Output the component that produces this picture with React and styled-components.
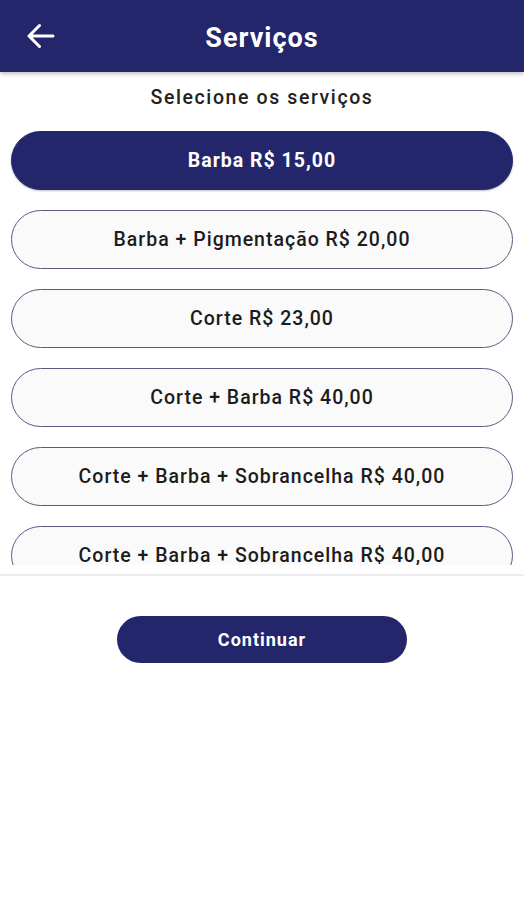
import styled, { createGlobalStyle } from "styled-components";

const navy = "#24266b";

const GlobalStyle = createGlobalStyle`
  html, body {
    margin: 0;
    padding: 0;
    background: #ffffff;
    font-family: Roboto, "Noto Sans", sans-serif;
  }
`;

const Screen = styled.div`
  width: 524px;
  height: 900px;
  display: flex;
  flex-direction: column;
  background: #ffffff;
`;

const Header = styled.header`
  height: 72px;
  flex-shrink: 0;
  background: ${navy};
  box-shadow: 0 2px 4px rgba(0, 0, 0, 0.25);
  display: grid;
  grid-template-columns: 80px 1fr 80px;
  align-items: center;
  position: relative;
  z-index: 1;
`;

const BackButton = styled.button`
  border: none;
  background: none;
  padding: 0 0 0 27px;
  height: 100%;
  display: flex;
  align-items: center;
  cursor: pointer;
`;

const Title = styled.h1`
  margin: 3px 0 0;
  text-align: center;
  color: #ffffff;
  font-size: 27px;
  font-weight: 700;
  letter-spacing: 1px;
`;

const Subtitle = styled.p`
  margin: 14px 0 0;
  line-height: 24px;
  text-align: center;
  font-size: 19.5px;
  font-weight: 500;
  letter-spacing: 1.6px;
  color: #222222;
`;

const ListViewport = styled.div`
  margin-top: 21px;
  height: 434px;
  overflow: hidden;
  padding: 0 11px;
`;

const List = styled.div`
  display: flex;
  flex-direction: column;
  gap: 20px;
`;

const ServiceButton = styled.button`
  height: 59px;
  width: 100%;
  border-radius: 30px;
  border: 1.5px solid ${(p) => (p.$selected ? navy : "#5a5b84")};
  background: ${(p) => (p.$selected ? navy : "#fafafa")};
  color: ${(p) => (p.$selected ? "#ffffff" : "#1c1c1c")};
  font-family: Roboto, sans-serif;
  font-size: 19.5px;
  font-weight: ${(p) => (p.$selected ? 700 : 500)};
  letter-spacing: 1px;
  box-shadow: ${(p) => (p.$selected ? "0 1px 2px rgba(0,0,0,0.25)" : "none")};
  cursor: pointer;
`;

const Divider = styled.hr`
  margin: 9px 0 0;
  border: none;
  border-top: 2px solid #ececec;
`;

const Footer = styled.div`
  display: flex;
  justify-content: center;
  padding-top: 40px;
`;

const ContinueButton = styled.button`
  width: 290px;
  height: 47px;
  border: none;
  border-radius: 24px;
  background: ${navy};
  color: #ffffff;
  font-family: Roboto, sans-serif;
  font-size: 18px;
  font-weight: 700;
  letter-spacing: 1px;
  cursor: pointer;
`;

const services = [
  "Barba R$ 15,00",
  "Barba + Pigmentação R$ 20,00",
  "Corte R$ 23,00",
  "Corte + Barba R$ 40,00",
  "Corte + Barba + Sobrancelha R$ 40,00",
  "Corte + Barba + Sobrancelha R$ 40,00",
];

function BackArrow() {
  return (
    <svg width="28" height="28" viewBox="0 0 28 28" fill="none">
      <path
        d="M2 14H26M12.5 3.5L2 14L12.5 24.5"
        stroke="#ffffff"
        strokeWidth="3"
        strokeLinecap="round"
        strokeLinejoin="round"
      />
    </svg>
  );
}

export default function App() {
  return (
    <>
      <GlobalStyle />
      <Screen>
        <Header>
          <BackButton aria-label="Voltar">
            <BackArrow />
          </BackButton>
          <Title>Serviços</Title>
          <span />
        </Header>
        <Subtitle>Selecione os serviços</Subtitle>
        <ListViewport>
          <List>
            {services.map((s, i) => (
              <ServiceButton key={i} $selected={i === 0}>
                {s}
              </ServiceButton>
            ))}
          </List>
        </ListViewport>
        <Divider />
        <Footer>
          <ContinueButton>Continuar</ContinueButton>
        </Footer>
      </Screen>
    </>
  );
}
